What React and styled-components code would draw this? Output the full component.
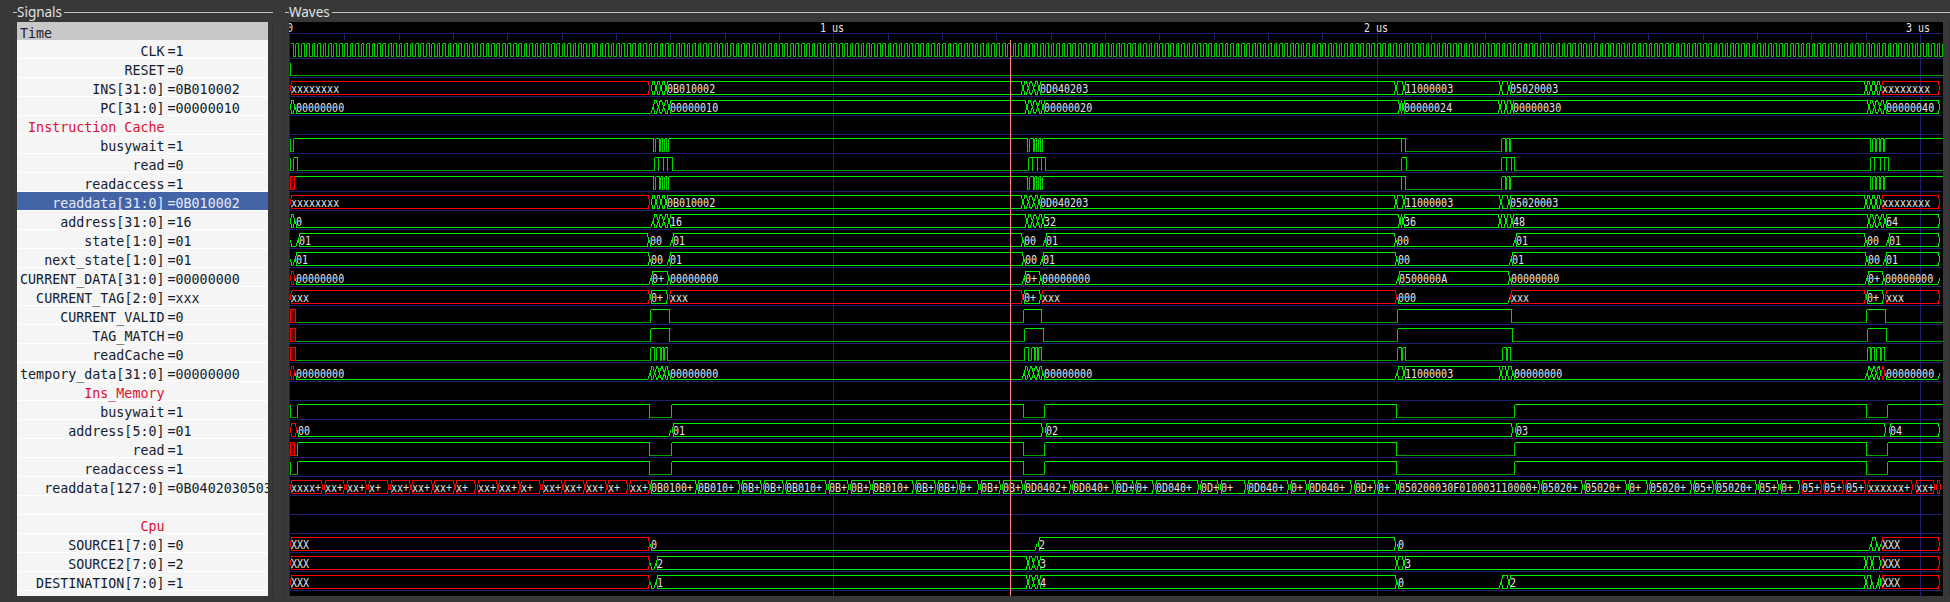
import React from 'react';
import styled, { createGlobalStyle } from 'styled-components';

const GlobalStyle = createGlobalStyle`
  html, body {
    margin: 0;
    height: 602px;
    overflow: hidden;
    background: #383838;
  }
`;

const Window = styled.div`
  display: flex;
  height: 602px;
  padding-left: 13px;
  box-sizing: border-box;
`;

const Frame = styled.section`
  display: flex;
  flex-direction: column;
  flex: ${p => (p.$grow ? '1' : 'none')};
  width: ${p => p.$width || 'auto'};
  margin-right: ${p => p.$gap || '0'};
  padding-bottom: 6px;
  box-sizing: border-box;
`;

const FrameHead = styled.header`
  display: flex;
  align-items: center;
  height: 22px;
  flex: none;
  padding-top: 3px;
  box-sizing: border-box;
  &::before {
    content: '';
    width: 4px;
    height: 1px;
    background: #c4c4c4;
  }
  &::after {
    content: '';
    flex: 1;
    height: 1px;
    background: #c4c4c4;
  }
`;

const FrameTitle = styled.h2`
  margin: 0;
  font: 400 13.5px 'Noto Sans', sans-serif;
  color: #e2e2e2;
  padding-right: 2px;
  line-height: 19px;
`;

const FrameBody = styled.div`
  flex: 1;
  display: flex;
  min-height: 0;
  padding: 0 ${p => p.$right || '4px'} 0 4px;
  border-left: 1px solid #303030;
  border-right: 1px solid #303030;
  margin-left: -1px;
`;

const SignalList = styled.div`
  width: 252px;
  background: #f5f5f5;
  font: 13.33px 'DejaVu Sans Mono', monospace;
  color: #14202c;
  overflow: hidden;
`;

const TimeRow = styled.div`
  height: 18px;
  line-height: 23px;
  padding-left: 3px;
  background: #c8c8c8;
  color: #1c2630;
`;

const SignalRow = styled.div`
  display: flex;
  height: 18px;
  line-height: 24px;
  border-bottom: 1px solid #fff;
  white-space: pre;
  background: ${p => (p.$selected ? '#4464a8' : 'transparent')};
  color: ${p => (p.$selected ? '#e6ecf8' : 'inherit')};
`;

const SignalName = styled.span`
  flex: none;
  width: 147.5px;
  height: 18px;
  text-align: right;
  color: ${p => (p.$comment ? '#dc1030' : 'inherit')};
`;

const SignalValue = styled.span`
  flex: none;
  height: 18px;
  margin-left: 3px;
`;

const WaveSvg = styled.svg`
  display: block;
  width: 1654px;
  height: 574px;
  background: #000;
`;

const GridLine = styled.path`
  fill: none;
  stroke: #1f1f78;
  stroke-width: 1;
`;

const CursorLine = styled.path`
  fill: none;
  stroke: #ff8080;
  stroke-width: 1;
`;

const BusShape = styled.path`
  fill: none;
  stroke: ${p => (p.$red ? '#ff0000' : '#00f000')};
  stroke-width: 1;
`;

const UnknownBox = styled.path`
  fill: #680000;
  stroke: #ff0000;
  stroke-width: 1;
`;

const LEVEL_COLORS = { high: '#00f000', low: '#00a000', edge: '#00d400', clock: '#00c800' };

const Level = styled.path`
  fill: none;
  stroke: ${p => LEVEL_COLORS[p.$kind]};
  stroke-width: 1;
`;

const WaveLabel = styled.text`
  font-family: 'DejaVu Sans Mono', monospace;
  font-size: 12px;
  fill: #e4e4e4;
`;

const LEFT = 289;
const TOP = 22;
const RIGHT = 1942;
const BOTTOM = 596;
const ROW_H = 19;
const FIRST_ROW = 40;
const US = 543.3;
const ZERO = 290;

const CLK_TOGGLES = [];
for (let x = ZERO + 2.717; x < RIGHT; x += 2.717) CLK_TOGGLES.push(x);

const pulse = (...xs) => xs;

// readdata[127:0] boxes, measured off the trace
const MEM_LINE = [
  ['x', 290, 323, 'xxxx+'], ['x', 324, 345, 'xx+'], ['x', 346, 367, 'xx+'], ['x', 368, 389, 'x+'],
  ['x', 390, 411, 'xx+'], ['x', 411, 433, 'xx+'], ['x', 433, 455, 'xx+'], ['x', 455, 476, 'x+'],
  ['x', 477, 498, 'xx+'], ['x', 498, 520, 'xx+'], ['x', 520, 541, 'x+'], ['x', 542, 563, 'xx+'],
  ['x', 563, 585, 'xx+'], ['x', 585, 607, 'xx+'], ['x', 607, 628, 'x+'], ['x', 629, 650, 'xx+'],
  ['v', 650, 697, '0B0100+'], ['v', 697, 740, '0B010+'], ['v', 741, 762, '0B+'], ['v', 763, 784, '0B+'],
  ['v', 785, 827, '0B010+'], ['v', 828, 849, '0B+'], ['v', 850, 871, '0B+'], ['v', 872, 914, '0B010+'],
  ['v', 915, 936, '0B+'], ['v', 937, 958, '0B+'], ['v', 959, 979, '0+'], ['v', 980, 1001, '0B+'],
  ['v', 1002, 1023, '0B+'], ['v', 1024, 1071, '0D0402+'], ['v', 1072, 1114, '0D040+'], ['v', 1115, 1134, '0D+'],
  ['v', 1135, 1154, '0+'], ['v', 1155, 1199, '0D040+'], ['v', 1200, 1219, '0D+'], ['v', 1220, 1246, '0+'],
  ['v', 1247, 1289, '0D040+'], ['v', 1290, 1307, '0+'], ['v', 1308, 1352, '0D040+'], ['v', 1354, 1376, '0D+'],
  ['v', 1377, 1397, '0+'], ['v', 1398, 1540, '050200030F010003110000+'], ['v', 1541, 1583, '05020+'],
  ['v', 1584, 1627, '05020+'], ['v', 1628, 1648, '0+'], ['v', 1649, 1692, '05020+'], ['v', 1693, 1714, '05+'],
  ['v', 1715, 1757, '05020+'], ['v', 1758, 1779, '05+'], ['v', 1780, 1800, '0+'], ['x', 1801, 1822, '05+'],
  ['x', 1823, 1844, '05+'], ['x', 1845, 1866, '05+'], ['x', 1867, 1913, 'xxxxxx+'], ['x', 1915, 1935, 'xx+'],
  ['x', 1936, 1941, ''],
];

const INS_SEGS = [
  ['x', 290, 650, 'xxxxxxxx'], ['d', 651, 666], ['v', 666, 1023, '0B010002'], ['d', 1023, 1039],
  ['v', 1039, 1396, '0D040203'], ['d', 1396, 1404], ['v', 1404, 1501, '11000003'], ['d', 1501, 1509],
  ['v', 1509, 1866, '05020003'], ['d', 1866, 1881], ['x', 1881, 1940, 'xxxxxxxx'],
];

const pcSegs = (a, b, c, d, e, f) => [
  ['d', 290, 295], ['z', 295, 653, a], ['d', 653, 669], ['v', 669, 1027, b],
  ['d', 1027, 1043], ['v', 1043, 1400, c], ['d', 1400, 1403], ['v', 1403, 1500, d], ['d', 1500, 1512],
  ['v', 1512, 1869, e], ['d', 1869, 1885], ['v', 1885, 1940, f],
];

const BUSY_TOGGLES = pulse(
  653, 655, 659, 660, 662, 664, 666, 668,
  1027, 1029, 1033, 1034, 1036, 1038, 1040, 1042,
  1401, 1401, 1405, 1501, 1505, 1506, 1509, 1510,
  1870, 1872, 1875, 1876, 1879, 1880, 1883, 1884,
);

const READ_TOGGLES = pulse(
  654, 658, 658, 663, 663, 667, 667, 672,
  1028, 1032, 1032, 1037, 1037, 1041, 1041, 1045,
  1401, 1406,
  1501, 1506, 1506, 1511, 1511, 1514,
  1870, 1874, 1874, 1880, 1880, 1884, 1884, 1888,
);

const MEM_BUSY = pulse(649, 671, 1023, 1044, 1396, 1514, 1866, 1887);

const ROWS = [
  { name: 'CLK', value: '1', wave: { init: 1, toggles: CLK_TOGGLES, clock: true } },
  { name: 'RESET', value: '0', wave: { init: 1, toggles: [290] } },
  { name: 'INS[31:0]', value: '0B010002', segs: INS_SEGS },
  { name: 'PC[31:0]', value: '00000010', segs: pcSegs('00000000', '00000010', '00000020', '00000024', '00000030', '00000040') },
  { name: 'Instruction Cache', comment: true },
  { name: 'busywait', value: '1', wave: { init: 1, toggles: [290, 293, ...BUSY_TOGGLES] } },
  { name: 'read', value: '0', wave: { init: 1, toggles: [290, 293, 297, ...READ_TOGGLES] } },
  { name: 'readaccess', value: '1', wave: { init: 1, unknown: 294, toggles: BUSY_TOGGLES } },
  { name: 'readdata[31:0]', value: '0B010002', selected: true, segs: INS_SEGS },
  { name: 'address[31:0]', value: '16', segs: pcSegs('0', '16', '32', '36', '48', '64') },
  {
    name: 'state[1:0]', value: '01', segs: [
      ['z', 290, 298], ['v', 298, 649, '01'], ['z', 649, 672, '00'], ['v', 672, 1023, '01'], ['z', 1023, 1045, '00'],
      ['v', 1045, 1396, '01'], ['z', 1396, 1515, '00'], ['v', 1515, 1866, '01'], ['z', 1866, 1888, '00'], ['v', 1888, 1940, '01'],
    ],
  },
  {
    name: 'next_state[1:0]', value: '01', segs: [
      ['z', 290, 295], ['v', 295, 650, '01'], ['z', 650, 669, '00'], ['v', 669, 1024, '01'], ['z', 1024, 1042, '00'],
      ['v', 1042, 1397, '01'], ['z', 1397, 1511, '00'], ['v', 1511, 1867, '01'], ['z', 1867, 1885, '00'], ['v', 1885, 1940, '01'],
    ],
  },
  {
    name: 'CURRENT_DATA[31:0]', value: '00000000', segs: [
      ['x', 290, 295], ['z', 295, 651, '00000000'], ['v', 651, 669, '0+'], ['z', 669, 1024, '00000000'], ['v', 1024, 1041, '0+'],
      ['z', 1041, 1398, '00000000'], ['v', 1398, 1510, '0500000A'], ['z', 1510, 1867, '00000000'], ['v', 1867, 1884, '0+'],
      ['z', 1884, 1940, '00000000'],
    ],
  },
  {
    name: 'CURRENT_TAG[2:0]', value: 'xxx', segs: [
      ['x', 290, 650, 'xxx'], ['v', 650, 668, '0+'], ['x', 669, 1023, 'xxx'], ['v', 1023, 1041, '0+'], ['x', 1041, 1397, 'xxx'],
      ['z', 1397, 1510, '000'], ['x', 1510, 1866, 'xxx'], ['v', 1866, 1884, '0+'], ['x', 1885, 1940, 'xxx'],
    ],
  },
  { name: 'CURRENT_VALID', value: '0', wave: { init: 0, unknown: 295, toggles: [650, 669, 1023, 1041, 1397, 1511, 1866, 1885] } },
  { name: 'TAG_MATCH', value: '0', wave: { init: 0, unknown: 295, toggles: [650, 669, 1024, 1043, 1397, 1512, 1867, 1886] } },
  {
    name: 'readCache', value: '0', wave: {
      init: 0, unknown: 295, toggles: [
        650, 654, 656, 660, 661, 663, 664, 667,
        1024, 1028, 1031, 1034, 1035, 1037, 1038, 1041,
        1397, 1401, 1402, 1405, 1502, 1506, 1507, 1510,
        1867, 1870, 1871, 1874, 1876, 1880, 1881, 1884,
      ],
    },
  },
  {
    name: 'tempory_data[31:0]', value: '00000000', segs: [
      ['x', 290, 295], ['z', 295, 650, '00000000'], ['d', 650, 669], ['z', 669, 1024, '00000000'], ['d', 1024, 1043],
      ['z', 1043, 1397, '00000000'], ['d', 1397, 1404], ['v', 1404, 1501, '11000003'], ['d', 1501, 1513],
      ['z', 1513, 1867, '00000000'], ['d', 1867, 1881], ['x', 1881, 1885], ['z', 1885, 1940, '00000000'],
    ],
  },
  { name: 'Ins_Memory', comment: true },
  { name: 'busywait', value: '1', wave: { init: 1, toggles: [290, 297, ...MEM_BUSY] } },
  {
    name: 'address[5:0]', value: '01', segs: [
      ['x', 290, 297], ['z', 297, 671, '00'], ['v', 672, 1043, '01'], ['v', 1045, 1513, '02'], ['v', 1515, 1886, '03'], ['v', 1889, 1940, '04'],
    ],
  },
  { name: 'read', value: '1', wave: { init: 0, unknown: 294, toggles: [297, ...MEM_BUSY] } },
  { name: 'readaccess', value: '1', wave: { init: 1, toggles: [290, 297, ...MEM_BUSY] } },
  { name: 'readdata[127:0]', value: '0B0402030503', segs: MEM_LINE },
  { name: '', comment: true },
  { name: 'Cpu', comment: true },
  {
    name: 'SOURCE1[7:0]', value: '0', segs: [
      ['x', 290, 650, 'XXX'], ['z', 650, 1037, '0'], ['v', 1038, 1396, '2'], ['z', 1397, 1871, '0'], ['v', 1871, 1877], ['z', 1877, 1881],
      ['x', 1881, 1940, 'XXX'],
    ],
  },
  {
    name: 'SOURCE2[7:0]', value: '2', segs: [
      ['x', 290, 650, 'XXX'], ['z', 650, 656], ['v', 656, 1028, '2'], ['d', 1028, 1039], ['v', 1039, 1397, '3'], ['d', 1397, 1404],
      ['v', 1404, 1866, '3'], ['d', 1866, 1872], ['v', 1872, 1881], ['x', 1881, 1940, 'XXX'],
    ],
  },
  {
    name: 'DESTINATION[7:0]', value: '1', segs: [
      ['x', 290, 650, 'XXX'], ['z', 650, 656], ['v', 656, 1028, '1'], ['d', 1028, 1039], ['v', 1039, 1397, '4'], ['z', 1397, 1501, '0'],
      ['d', 1501, 1509], ['v', 1509, 1866, '2'], ['d', 1866, 1872], ['z', 1872, 1878], ['v', 1878, 1881], ['x', 1881, 1940, 'XXX'],
    ],
  },
];

const snap = x => Math.round(x) + 0.5;

const Label = ({ x, y, text }) => (
  <WaveLabel x={x} y={y} textLength={text.length * 6.02} lengthAdjust="spacingAndGlyphs">
    {text}
  </WaveLabel>
);

const expandDense = ([kind, a, b, label]) => {
  if (kind !== 'd') return [[kind, a, b, label]];
  const n = Math.max(1, Math.round((b - a) / 5.4));
  const w = (b - a) / n;
  return Array.from({ length: n }, (_, i) => ['v', a + i * w, a + (i + 1) * w]);
};

const BusWave = ({ top, segs }) => {
  const hi = top + 3.5;
  const lo = top + 16.5;
  const mid = top + 10;
  return segs.flatMap(expandDense).map(([kind, a, b, label], i) => {
    const s = Math.min(2, (b - a) / 2);
    const d = kind === 'z'
      ? `M${a} ${mid}L${a + s} ${lo}L${b - s} ${lo}L${b} ${mid}`
      : `M${a} ${mid}L${a + s} ${hi}L${b - s} ${hi}L${b} ${mid}L${b - s} ${lo}L${a + s} ${lo}Z`;
    return (
      <g key={i}>
        <BusShape d={d} $red={kind === 'x'} />
        {label && <Label x={a + 1} y={top + 14.5} text={label} />}
      </g>
    );
  });
};

const BitWave = ({ top, wave }) => {
  const hi = top + 3.5;
  const lo = top + 16.5;
  const start = wave.unknown || ZERO;
  let level = wave.init;
  let from = start;
  let high = '';
  let low = '';
  let edge = '';
  [...wave.toggles, RIGHT].forEach((t, i, all) => {
    const y = level ? hi : lo;
    const seg = `M${snap(from)} ${y}H${snap(t)}`;
    if (level) high += seg;
    else low += seg;
    if (i < all.length - 1) {
      edge += `M${snap(t)} ${hi}V${lo}`;
      level = 1 - level;
      from = t;
    }
  });
  if (wave.clock) return <Level $kind="clock" d={edge + low + high} />;
  return (
    <g>
      {wave.unknown && <UnknownBox d={`M${ZERO + 0.5} ${hi}H${snap(wave.unknown)}V${lo}H${ZERO + 0.5}Z`} />}
      <Level $kind="edge" d={edge} />
      <Level $kind="low" d={low} />
      <Level $kind="high" d={high} />
    </g>
  );
};

const Timeline = () => {
  const ticks = [];
  for (let i = 1; i * US * 0.1 + ZERO < RIGHT; i++) {
    if (i % 10) ticks.push(`M${snap(ZERO + i * US * 0.1)} 33V40`);
  }
  const majors = [0, 1, 2, 3].map(n => ZERO + n * US);
  return (
    <g>
      <GridLine d={`M${LEFT} 33.5H${RIGHT}${ticks.join('')}`} />
      {majors.map((x, n) => (
        <GridLine key={n} d={`M${n === 0 ? 289.5 : snap(x)} 33V${BOTTOM}`} />
      ))}
      <Label x={287} y={31.5} text="0" />
      <Label x={820} y={31.5} text="1 us" />
      <Label x={1364} y={31.5} text="2 us" />
      <Label x={1906} y={31.5} text="3 us" />
    </g>
  );
};

const Waves = () => (
  <WaveSvg viewBox={`${LEFT} ${TOP} 1654 574`} shapeRendering="crispEdges">
    <Timeline />
    {ROWS.map((row, i) => (
      <GridLine key={i} d={`M${LEFT} ${FIRST_ROW + i * ROW_H + 18.5}H${RIGHT}`} />
    ))}
    {ROWS.map((row, i) => {
      const top = FIRST_ROW + i * ROW_H;
      if (row.segs) return <BusWave key={i} top={top} segs={row.segs} />;
      if (row.wave) return <BitWave key={i} top={top} wave={row.wave} />;
      return null;
    })}
    <CursorLine d={`M1010.5 40V${BOTTOM}`} />
  </WaveSvg>
);

export default function App() {
  return (
    <>
      <GlobalStyle />
      <Window>
        <Frame $width="260px" $gap="12px">
          <FrameHead>
            <FrameTitle>Signals</FrameTitle>
          </FrameHead>
          <FrameBody>
            <SignalList>
              <TimeRow>Time</TimeRow>
              {ROWS.map((row, i) => (
                <SignalRow key={i} $selected={row.selected}>
                  <SignalName $comment={row.comment}>{row.name}</SignalName>
                  {row.value && <SignalValue>={row.value}</SignalValue>}
                </SignalRow>
              ))}
            </SignalList>
          </FrameBody>
        </Frame>
        <Frame $grow>
          <FrameHead>
            <FrameTitle>Waves</FrameTitle>
          </FrameHead>
          <FrameBody $right="0">
            <Waves />
          </FrameBody>
        </Frame>
      </Window>
    </>
  );
}
